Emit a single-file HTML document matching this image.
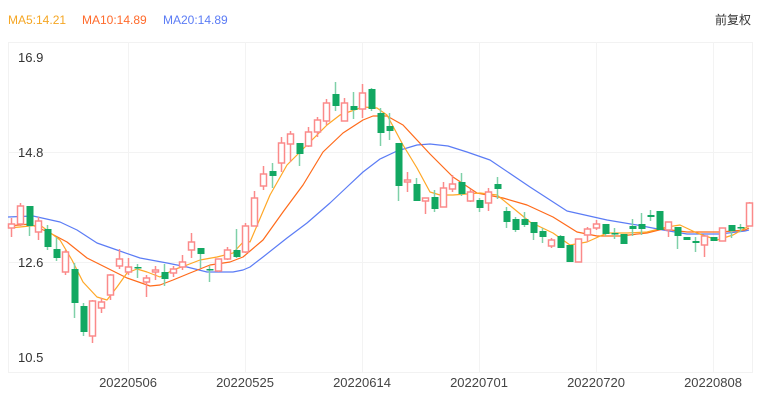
<!DOCTYPE html>
<html><head><meta charset="utf-8"><style>
html,body{margin:0;padding:0;background:#fff;}
body{width:766px;height:400px;overflow:hidden;position:relative;font-family:"Liberation Sans","Noto Sans CJK SC",sans-serif;}
.t{position:absolute;font-size:12px;line-height:14px;white-space:nowrap}
</style></head><body>
<div class="t" style="left:8px;top:13px;color:#f5a623">MA5:14.21</div>
<div class="t" style="left:82px;top:13px;color:#ff6a2b">MA10:14.89</div>
<div class="t" style="left:163px;top:13px;color:#5b7cf5">MA20:14.89</div>
<div class="t" style="left:715px;top:13px;color:#333;font-size:12px">前复权</div>
<svg id="s" width="766" height="400" style="position:absolute;left:0;top:0" xmlns="http://www.w3.org/2000/svg"></svg>
<script>
var s=document.getElementById('s'),h='';
h+='<rect x="8.5" y="42.5" width="744" height="330" fill="none" stroke="#f2f2f2"/>';
[128,245,362,479,596,713].forEach(function(x){h+='<line x1="'+(x+.5)+'" y1="42" x2="'+(x+.5)+'" y2="372" stroke="#f3f3f3"/>';});
[152,262].forEach(function(y){h+='<line x1="8" y1="'+(y+.5)+'" x2="752" y2="'+(y+.5)+'" stroke="#f3f3f3"/>';});
[['16.9',57],['14.8',152],['12.6',262],['10.5',357]].forEach(function(a){h+='<text x="18" y="'+(a[1]+5)+'" font-size="13" fill="#333" font-family="Liberation Sans,sans-serif">'+a[0]+'</text>';});
[['20220506',128],['20220525',245],['20220614',362],['20220701',479],['20220720',596],['20220808',713]].forEach(function(a){h+='<text x="'+a[1]+'" y="387" text-anchor="middle" font-size="13" fill="#444" font-family="Liberation Sans,sans-serif">'+a[0]+'</text>';});
var c=[
['r',224,228,218,237],['r',206,224,203,226],['g',206,226,206,236],['r',221,232,217,240],['g',229,247,225,250],
['g',249,258,237,261],['r',252,272,250,275],['g',269,303,263,318],['g',306,332,303,336],['r',301,336,300,343],
['r',302,308,298,313],['r',275,295,274,300],['r',259,266,249,269],['r',267,272,258,275],['g',267,268,264,278],
['r',278,282,275,297],['r',270,272,266,280],['g',272,279,264,286],['r',269,273,266,277],['r',262,267,255,270],
['r',242,250,233,258],['g',248,254,248,268],['g',269,270,266,282],['r',259,271,259,272],['r',250,259,247,260],
['g',250,257,229,258],['r',226,252,223,253],['r',198,226,191,226],['r',174,186,166,190],['g',171,176,163,188],
['r',143,163,137,172],['r',134,144,131,162],['g',143,154,143,166],['r',132,146,127,147],['r',120,132,117,137],
['r',103,121,99,125],['g',94,106,82,111],['r',103,121,98,121],['g',106,110,92,119],['r',93,109,84,118],
['g',89,109,88,111],['g',113,133,108,146],['g',126,131,113,140],['g',143,186,143,201],['r',180,182,172,192],
['g',184,201,178,201],['r',198,201,198,214],['g',197,209,190,212],['r',188,207,182,207],['r',184,189,175,192],
['g',182,194,173,196],['r',192,201,189,202],['g',200,208,198,212],['r',192,203,188,211],['g',184,189,177,199],
['g',211,222,207,228],['g',219,230,217,232],['g',219,225,212,227],['g',222,233,222,240],['g',231,237,228,243],
['r',240,246,238,248],['g',236,248,235,248],['g',245,262,245,262],['r',239,262,239,262],['r',229,235,227,242],
['r',224,228,220,230],['g',224,234,224,236],['g',233,234,228,239],['g',234,244,234,244],['g',226,229,219,236],
['g',224,229,213,235],['g',215,217,210,221],['g',211,230,211,230],['r',222,230,222,237],['g',227,236,227,249],
['g',237,240,237,240],['g',241,243,237,252],['r',236,245,236,257],['g',237,241,237,241],['r',228,241,228,241],
['g',225,231,225,238],['g',227,228,224,232],['r',203,226,202,226]];
function line(p,col){h+='<polyline fill="none" stroke="'+col+'" stroke-width="1.2" stroke-linejoin="round" points="'+p.map(function(a){return a.join(',')}).join(' ')+'"/>';}
line([[8,217],[33,216],[60,222],[77,230],[97,243],[117,250],[140,258],[167,263],[187,267],[207,272],[233,272],[243,270],[250,267],[263,257],[287,238],[307,223],[330,203],[347,187],[363,172],[380,159],[397,151],[417,145],[430,144],[448,146],[467,152],[490,160],[530,187],[567,211],[607,220],[637,225],[663,230],[687,234],[720,234],[745,231],[749,230]],'#5b7cf5');
line([[8,226],[30,224],[50,233],[67,242],[87,258],[107,268],[127,278],[150,286],[160,285],[173,280],[190,273],[210,265],[230,262],[243,257],[263,240],[283,212],[303,185],[323,152],[343,133],[363,120],[373,116],[387,116],[403,125],[430,154],[453,177],[477,193],[503,198],[527,205],[553,217],[577,232],[597,236],[620,236],[647,233],[663,229],[687,232],[720,232],[745,230],[749,228]],'#ff6a1a');
line([[8,228],[20,227],[40,225],[60,240],[72,260],[83,282],[97,297],[107,300],[117,287],[127,273],[137,269],[147,272],[160,277],[173,270],[187,265],[200,260],[217,257],[233,253],[245,240],[250,242],[270,195],[287,165],[307,145],[327,125],[340,115],[363,107],[377,108],[387,115],[403,145],[417,168],[430,192],[440,195],[453,195],[480,193],[497,195],[513,208],[530,222],[553,233],[570,245],[587,242],[607,233],[627,233],[647,232],[667,227],[680,225],[697,233],[717,240],[733,235],[749,226]],'#ffa726');
c.forEach(function(d,i){var x=11+9*i,r=d[0]=='r';
 var wc=r?'#fb8a8a':'#7fd0a8';
 h+='<line x1="'+(x+.5)+'" y1="'+d[3]+'" x2="'+(x+.5)+'" y2="'+d[4]+'" stroke="'+wc+'" stroke-width="1.5"/>';
 var hh=Math.max(d[2]-d[1],1.5);
 if(r) h+='<rect x="'+(x-2.5)+'" y="'+d[1]+'" width="6" height="'+hh+'" fill="#fff" stroke="#fb8a8a" stroke-width="1.5"/>';
 else h+='<rect x="'+(x-2.5)+'" y="'+d[1]+'" width="7" height="'+hh+'" fill="#12a862"/>';
});
s.innerHTML=h;
</script>
</body></html>
